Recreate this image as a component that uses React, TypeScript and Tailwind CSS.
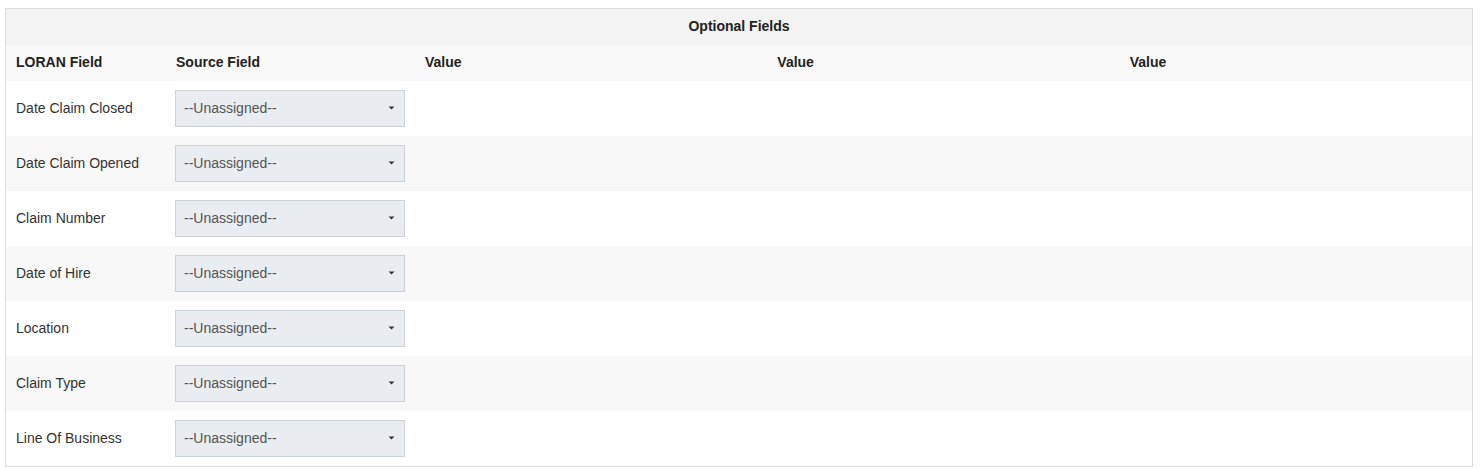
import React from "react";

const rows = [
  "Date Claim Closed",
  "Date Claim Opened",
  "Claim Number",
  "Date of Hire",
  "Location",
  "Claim Type",
  "Line Of Business",
];

function Select() {
  return (
    <div className="flex h-[37px] w-[230px] items-center justify-between border border-[#ccd0d7] bg-[#e9ecf0] pl-[8px] pr-[9px] text-[14px] text-[#555]">
      <span>--Unassigned--</span>
      <svg width="7" height="4" viewBox="0 0 7 4" className="block -mt-[2px]">
        <path d="M0.5 0.5 L6.5 0.5 L3.5 3.5 Z" fill="#333" />
      </svg>
    </div>
  );
}

export default function App() {
  return (
    <div className="bg-white pl-[5px] pt-[8px] pr-[10px] pb-[3px] font-['Liberation_Sans',Arial,sans-serif] text-[14px] text-[#333]">
      <div className="border border-[#dddddd]">
        <table className="w-full table-fixed border-collapse">
          <colgroup>
            <col className="w-[160px]" />
            <col className="w-[249px]" />
            <col />
            <col />
            <col />
          </colgroup>
          <thead>
            <tr className="h-[36px] bg-[#f3f3f3]">
              <th colSpan={5} className="pb-[2px] text-center font-bold text-[#222]">
                Optional Fields
              </th>
            </tr>
            <tr className="h-[36px] bg-[#f9f9f9]">
              <th className="pb-[2px] pl-[10px] text-left font-bold text-[#222]">LORAN Field</th>
              <th className="pb-[2px] pl-[10px] text-left font-bold text-[#222]">Source Field</th>
              <th className="pb-[2px] pl-[10px] text-left font-bold text-[#222]">Value</th>
              <th className="pb-[2px] pl-[10px] text-left font-bold text-[#222]">Value</th>
              <th className="pb-[2px] pl-[10px] text-left font-bold text-[#222]">Value</th>
            </tr>
          </thead>
          <tbody>
            {rows.map((r, i) => (
              <tr key={r} className={i % 2 === 1 ? "h-[55px] bg-[#f8f8f8]" : "h-[55px] bg-white"}>
                <td className="pl-[10px] align-middle">{r}</td>
                <td className="pl-[9px] align-middle">
                  <Select />
                </td>
                <td />
                <td />
                <td />
              </tr>
            ))}
          </tbody>
        </table>
      </div>
    </div>
  );
}
